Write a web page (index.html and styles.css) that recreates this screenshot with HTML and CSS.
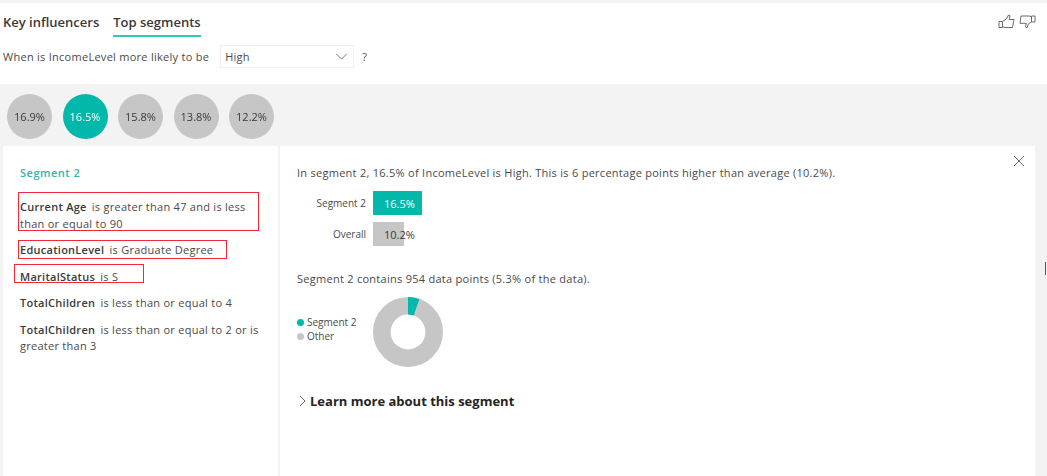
FILE: index.html
```html
<!DOCTYPE html>
<html lang="en">
<head>
    <meta charset="UTF-8">
    <title>Top segments</title>
    <link rel="stylesheet" href="styles.css">
</head>
<body>
<div class="page">
<div class="header">
    <div class="tabs">
        <span class="tab">Key influencers</span>
        <span class="tab active">Top segments</span>
        <div class="thumbs">
            <svg width="17" height="15" viewBox="0 0 17 15"><path d="M1 7.500h3.500v6H1zM4.500 7.500l4-2.500 2-4 1.500.7-.8 3.800H16l-1.500 8H7l-2.500-.8" /></svg>
            <svg width="17" height="15" viewBox="0 0 17 15"><path d="M16 2h-3.500v6H16zM12.500 8l-3 1.800-1.500 4-1.500-.7.8-3.800H1L2 2h8l2.500.5" /></svg>
        </div>
    </div>
    <div class="question">
        <span>When is IncomeLevel more likely to be</span>
        <div class="select">
            <span>High</span>
            <svg width="13" height="7" viewBox="0 0 14 8"><path d="M1 1l6 6 6-6" /></svg>
        </div>
        <span>?</span>
    </div>
</div>

<div class="content">
    <div class="bubbles">
        <div class="bubble">16.9%</div>
        <div class="bubble selected">16.5%</div>
        <div class="bubble">15.8%</div>
        <div class="bubble">13.8%</div>
        <div class="bubble">12.2%</div>
    </div>

    <div class="panels">
        <div class="panel-left">
            <div class="segment-title">Segment 2</div>
            <div class="rule"><b>Current Age</b> is greater than 47 and is less<br>than or equal to 90</div>
            <div class="rule"><b>EducationLevel</b> is Graduate Degree</div>
            <div class="rule"><b>MaritalStatus</b> is S</div>
            <div class="rule"><b>TotalChildren</b> is less than or equal to 4</div>
            <div class="rule"><b>TotalChildren</b> is less than or equal to 2 or is<br>greater than 3</div>

            <div class="red-box box1"></div>
            <div class="red-box box2"></div>
            <div class="red-box box3"></div>
        </div>

        <div class="panel-right">
            <svg class="close" width="12" height="12" viewBox="0 0 12 12"><path d="M1 1l10 10M11 1L1 11" /></svg>
            <p class="summary">In segment 2, 16.5% of IncomeLevel is High. This is 6 percentage points higher than average (10.2%).</p>
            <div class="bars">
                <div class="bar-row">
                    <span class="bar-label">Segment 2</span>
                    <div class="bar-track">
                        <div class="bar teal" style="width:49px"></div>
                        <span class="bar-value light">16.5%</span>
                    </div>
                </div>
                <div class="bar-row">
                    <span class="bar-label">Overall</span>
                    <div class="bar-track">
                        <div class="bar grey" style="width:31px"></div>
                        <span class="bar-value">10.2%</span>
                    </div>
                </div>
            </div>
            <p class="points">Segment 2 contains 954 data points (5.3% of the data).</p>
            <div class="donut-row">
                <div class="legend">
                    <div class="legend-item"><i class="dot teal"></i>Segment 2</div>
                    <div class="legend-item"><i class="dot grey"></i>Other</div>
                </div>
                <svg class="donut" width="70" height="70" viewBox="0 0 70 70">
                    <circle class="ring" cx="35" cy="35" r="26.200" />
                    <circle class="slice" cx="35" cy="35" r="26.200" stroke-dasharray="8.700 156" transform="rotate(-90 35 35)" />
                </svg>
            </div>
            <div class="learn">
                <svg width="8" height="12" viewBox="0 0 8 12"><path d="M1 1l5 5-5 5" /></svg>
                <span>Learn more about this segment</span>
            </div>
        </div>
    </div>
</div>
<div class="edge-mark"></div>
</div>
</body>
</html>
```

FILE: styles.css
```css
body {
    margin: 0;
    background: #f3f3f3;
}

.page {
    width: 1047px;
    height: 476px;
    overflow: hidden;
    position: relative;
    font-family: "Open Sans", Arial, sans-serif;
    font-size: 11px;
    letter-spacing: .27px;
    color: #4a4a4a;
    /* the reference is an upscaled, slightly soft screenshot */
    filter: blur(.35px);
}

svg path {
    fill: none;
    stroke: #6a6a6a;
    stroke-width: 1;
}

.header {
    margin-top: 3px;
    height: 81px;
    background: #fff;
    box-sizing: border-box;
    padding: 9px 0 0 3px;
}
.tabs {
    display: flex;
    align-items: flex-start;
    gap: 14px;
    height: 25px;
}
.tab {
    font-size: 13px;
    font-weight: 600;
    letter-spacing: 0;
    color: #3b3a39;
    padding-bottom: 3px;
    line-height: 20px;
}
.tab.active {
    border-bottom: 2px solid #30c9b8;
}
.thumbs {
    margin-left: auto;
    margin-right: 11px;
    display: flex;
    gap: 4px;
    padding-top: 2px;
}
.question {
    display: flex;
    align-items: center;
    margin-top: 8px;
    height: 23px;
}
.select {
    width: 134px;
    height: 23px;
    border: 1px solid #efefef;
    box-sizing: border-box;
    margin: 0 8px 0 11px;
    padding: 0 5px 0 4px;
    display: flex;
    align-items: center;
    justify-content: space-between;
}

.bubbles {
    display: flex;
    gap: 10.500px;
    padding: 10px 0 0 7px;
    height: 52px;
}
.bubble {
    width: 45px;
    height: 45px;
    border-radius: 50%;
    background: #c6c6c6;
    display: flex;
    align-items: center;
    justify-content: center;
    color: #3b3a39;
    letter-spacing: 0;
}
.bubble.selected {
    background: #01b8aa;
    color: #fff;
}

.panels {
    display: flex;
    gap: 2px;
    padding-left: 3px;
}
.panel-left {
    width: 275px;
    height: 330px;
    background: #fff;
    position: relative;
    box-sizing: border-box;
    padding: 19px 17px 0;
}
.segment-title {
    color: #2cb8a8;
    font-weight: 600;
    letter-spacing: .5px;
    margin-bottom: 19px;
}
.rule {
    line-height: 16.500px;
    margin-bottom: 10px;
}
.rule b {
    font-weight: 600;
    color: #3b3a39;
    margin-right: 2px;
}
.red-box {
    position: absolute;
    border: 1px solid #ee2b3b;
    box-sizing: border-box;
}
.box1 { left: 15px; top: 46px; width: 241px; height: 39px; }
.box2 { left: 15px; top: 94px; width: 209px; height: 19px; }
.box3 { left: 11px; top: 118px; width: 130px; height: 19px; }

.panel-right {
    width: 755px;
    height: 330px;
    background: #fff;
    position: relative;
    box-sizing: border-box;
    padding: 19px 17px 0;
}
.close {
    position: absolute;
    top: 9px;
    right: 10px;
}
.summary, .points {
    margin: 0;
    line-height: 16px;
}
.bars {
    margin-top: 10px;
    display: flex;
    flex-direction: column;
    gap: 7px;
}
.bar-row {
    display: flex;
    align-items: center;
    gap: 7px;
}
.bar-label {
    width: 69px;
    text-align: right;
    letter-spacing: 0;
    font-size: 10px;
}
.bar-track {
    width: 49px;
    height: 24px;
    position: relative;
}
.bar {
    height: 100%;
}
.teal { background: #01b8aa; }
.grey { background: #c6c6c6; }
.bar-value {
    position: absolute;
    left: 11px;
    top: 5px;
    color: #3b3a39;
    letter-spacing: 0;
}
.bar-value.light { color: #fff; }
.points {
    margin-top: 25px;
}
.donut-row {
    display: flex;
    align-items: center;
    margin-top: 10px;
}
.legend {
    width: 76px;
    margin-top: -6px;
    letter-spacing: 0;
    font-size: 10px;
}
.legend-item {
    display: flex;
    align-items: center;
    gap: 3px;
    line-height: 14px;
}
.dot {
    width: 7px;
    height: 7px;
    border-radius: 50%;
}
.ring, .slice {
    fill: none;
    stroke-width: 17.500;
}
.ring { stroke: #c6c6c6; }
.slice { stroke: #01b8aa; }
.learn {
    display: flex;
    align-items: center;
    gap: 3px;
    margin-top: 25px;
    margin-left: 2px;
    margin-right: -2px;
    font-size: 13px;
    font-weight: 700;
    letter-spacing: 0;
    color: #252423;
}

.edge-mark {
    position: absolute;
    left: 1045px;
    top: 262px;
    width: 1px;
    height: 13px;
    background: #555;
}
```
